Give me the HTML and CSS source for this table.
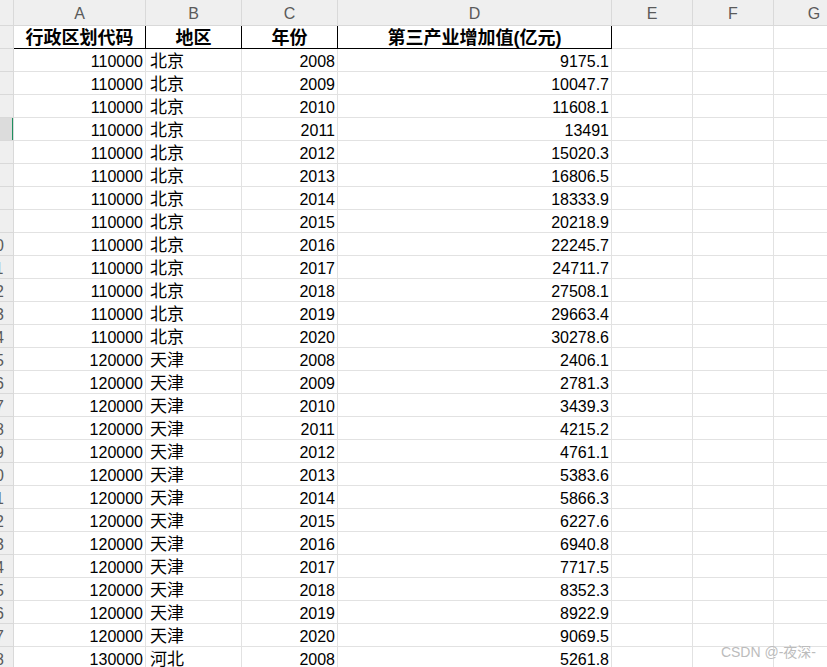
FILE: index.html
```html
<!DOCTYPE html>
<html lang="zh">
<head>
<meta charset="utf-8">
<link rel="stylesheet" href="styles.css">
</head>
<body>
<div class="sheet">
  <div class="ch corner"></div>
  <div class="ch">A</div><div class="ch">B</div><div class="ch">C</div><div class="ch">D</div><div class="ch">E</div><div class="ch">F</div><div class="ch">G</div>

  <div class="rh"><span>1</span></div>
  <div class="c hd">行政区划代码</div><div class="c hd">地区</div><div class="c hd">年份</div><div class="c hd">第三产业增加值(亿元)</div><div class="c"></div><div class="c"></div><div class="c"></div>

  <div class="rh"><span>2</span></div><div class="c n">110000</div><div class="c t">北京</div><div class="c n">2008</div><div class="c n">9175.1</div><div class="c"></div><div class="c"></div><div class="c"></div>
  <div class="rh"><span>3</span></div><div class="c n">110000</div><div class="c t">北京</div><div class="c n">2009</div><div class="c n">10047.7</div><div class="c"></div><div class="c"></div><div class="c"></div>
  <div class="rh"><span>4</span></div><div class="c n">110000</div><div class="c t">北京</div><div class="c n">2010</div><div class="c n">11608.1</div><div class="c"></div><div class="c"></div><div class="c"></div>
  <div class="rh sel"><span>5</span></div><div class="c n">110000</div><div class="c t">北京</div><div class="c n">2011</div><div class="c n">13491</div><div class="c"></div><div class="c"></div><div class="c"></div>
  <div class="rh"><span>6</span></div><div class="c n">110000</div><div class="c t">北京</div><div class="c n">2012</div><div class="c n">15020.3</div><div class="c"></div><div class="c"></div><div class="c"></div>
  <div class="rh"><span>7</span></div><div class="c n">110000</div><div class="c t">北京</div><div class="c n">2013</div><div class="c n">16806.5</div><div class="c"></div><div class="c"></div><div class="c"></div>
  <div class="rh"><span>8</span></div><div class="c n">110000</div><div class="c t">北京</div><div class="c n">2014</div><div class="c n">18333.9</div><div class="c"></div><div class="c"></div><div class="c"></div>
  <div class="rh"><span>9</span></div><div class="c n">110000</div><div class="c t">北京</div><div class="c n">2015</div><div class="c n">20218.9</div><div class="c"></div><div class="c"></div><div class="c"></div>
  <div class="rh"><span>10</span></div><div class="c n">110000</div><div class="c t">北京</div><div class="c n">2016</div><div class="c n">22245.7</div><div class="c"></div><div class="c"></div><div class="c"></div>
  <div class="rh"><span>11</span></div><div class="c n">110000</div><div class="c t">北京</div><div class="c n">2017</div><div class="c n">24711.7</div><div class="c"></div><div class="c"></div><div class="c"></div>
  <div class="rh"><span>12</span></div><div class="c n">110000</div><div class="c t">北京</div><div class="c n">2018</div><div class="c n">27508.1</div><div class="c"></div><div class="c"></div><div class="c"></div>
  <div class="rh"><span>13</span></div><div class="c n">110000</div><div class="c t">北京</div><div class="c n">2019</div><div class="c n">29663.4</div><div class="c"></div><div class="c"></div><div class="c"></div>
  <div class="rh"><span>14</span></div><div class="c n">110000</div><div class="c t">北京</div><div class="c n">2020</div><div class="c n">30278.6</div><div class="c"></div><div class="c"></div><div class="c"></div>
  <div class="rh"><span>15</span></div><div class="c n">120000</div><div class="c t">天津</div><div class="c n">2008</div><div class="c n">2406.1</div><div class="c"></div><div class="c"></div><div class="c"></div>
  <div class="rh"><span>16</span></div><div class="c n">120000</div><div class="c t">天津</div><div class="c n">2009</div><div class="c n">2781.3</div><div class="c"></div><div class="c"></div><div class="c"></div>
  <div class="rh"><span>17</span></div><div class="c n">120000</div><div class="c t">天津</div><div class="c n">2010</div><div class="c n">3439.3</div><div class="c"></div><div class="c"></div><div class="c"></div>
  <div class="rh"><span>18</span></div><div class="c n">120000</div><div class="c t">天津</div><div class="c n">2011</div><div class="c n">4215.2</div><div class="c"></div><div class="c"></div><div class="c"></div>
  <div class="rh"><span>19</span></div><div class="c n">120000</div><div class="c t">天津</div><div class="c n">2012</div><div class="c n">4761.1</div><div class="c"></div><div class="c"></div><div class="c"></div>
  <div class="rh"><span>20</span></div><div class="c n">120000</div><div class="c t">天津</div><div class="c n">2013</div><div class="c n">5383.6</div><div class="c"></div><div class="c"></div><div class="c"></div>
  <div class="rh"><span>21</span></div><div class="c n">120000</div><div class="c t">天津</div><div class="c n">2014</div><div class="c n">5866.3</div><div class="c"></div><div class="c"></div><div class="c"></div>
  <div class="rh"><span>22</span></div><div class="c n">120000</div><div class="c t">天津</div><div class="c n">2015</div><div class="c n">6227.6</div><div class="c"></div><div class="c"></div><div class="c"></div>
  <div class="rh"><span>23</span></div><div class="c n">120000</div><div class="c t">天津</div><div class="c n">2016</div><div class="c n">6940.8</div><div class="c"></div><div class="c"></div><div class="c"></div>
  <div class="rh"><span>24</span></div><div class="c n">120000</div><div class="c t">天津</div><div class="c n">2017</div><div class="c n">7717.5</div><div class="c"></div><div class="c"></div><div class="c"></div>
  <div class="rh"><span>25</span></div><div class="c n">120000</div><div class="c t">天津</div><div class="c n">2018</div><div class="c n">8352.3</div><div class="c"></div><div class="c"></div><div class="c"></div>
  <div class="rh"><span>26</span></div><div class="c n">120000</div><div class="c t">天津</div><div class="c n">2019</div><div class="c n">8922.9</div><div class="c"></div><div class="c"></div><div class="c"></div>
  <div class="rh"><span>27</span></div><div class="c n">120000</div><div class="c t">天津</div><div class="c n">2020</div><div class="c n">9069.5</div><div class="c"></div><div class="c"></div><div class="c"></div>
  <div class="rh"><span>28</span></div><div class="c n">130000</div><div class="c t">河北</div><div class="c n">2008</div><div class="c n">5261.8</div><div class="c"></div><div class="c"></div><div class="c"></div>
</div>
<div class="watermark">CSDN @-夜深-</div>
</body>
</html>
```

FILE: styles.css
```css
html, body {
  margin: 0;
  padding: 0;
  background: #ffffff;
  overflow: hidden;
  width: 827px;
  height: 667px;
}

body {
  position: relative;
  font-family: "Liberation Sans", "Noto Sans CJK SC", sans-serif;
}

.sheet {
  display: grid;
  grid-template-columns: 14px 132px 96px 96px 274px 81px 81px 81px;
  grid-template-rows: 26px;
  grid-auto-rows: 23px;
  width: 855px;
}

.ch {
  box-sizing: border-box;
  background: #efefef;
  border-right: 1px solid #d9d9d9;
  border-bottom: 1px solid #d9d9d9;
  color: #5a5a5a;
  font-size: 16px;
  line-height: 25px;
  padding-top: 1px;
  text-align: center;
  overflow: hidden;
}

.ch.corner {
  border-right-color: #d9d9d9;
}

.rh {
  box-sizing: border-box;
  background: #efefef;
  border-right: 1px solid #d9d9d9;
  border-bottom: 1px solid #d9d9d9;
  overflow: hidden;
  position: relative;
}

.rh span {
  display: block;
  width: 36px;
  margin-left: -23px;
  text-align: center;
  color: #5a5a5a;
  font-size: 16px;
  line-height: 22px;
  padding-top: 2px;
}

.rh.sel {
  background: #dcdcdc;
}

.rh.sel::after {
  content: "";
  position: absolute;
  right: -1px;
  top: 0;
  bottom: -1px;
  width: 2px;
  background: #1f8f5f;
}

.c {
  box-sizing: border-box;
  border-right: 1px solid #e2e2e2;
  border-bottom: 1px solid #e2e2e2;
  color: #000000;
  font-size: 16px;
  line-height: 22px;
  padding: 2px 3px 0 3px;
  white-space: nowrap;
  overflow: hidden;
}

.c.n {
  text-align: right;
  padding-right: 2px;
}

.c.t {
  text-align: left;
  font-size: 17px;
  padding-left: 4px;
}

.c.hd {
  font-size: 18px;
  font-weight: bold;
  text-align: center;
  padding-top: 1px;
  border-right: 1px solid #000000;
  border-bottom: 1px solid #000000;
}

.watermark {
  position: absolute;
  right: 11px;
  bottom: 6px;
  color: #bcbcbc;
  font-size: 14px;
  font-family: "Liberation Sans", "Noto Sans CJK SC", sans-serif;
}
```
